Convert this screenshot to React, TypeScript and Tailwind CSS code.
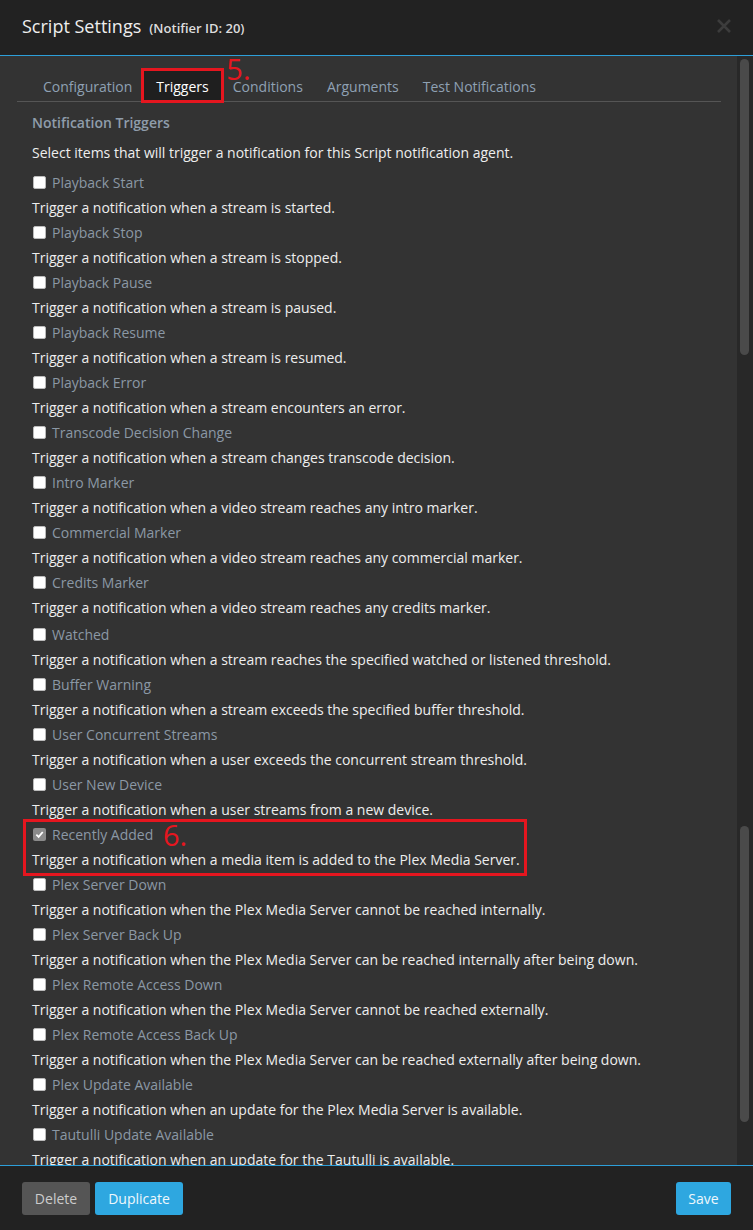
import React from "react";

// Script notifier modal, Triggers tab. Static mock of the settings dialog.

const triggers: Array<{ label: string; desc: string; checked?: boolean; extra?: boolean }> = [
  { label: "Playback Start", desc: "Trigger a notification when a stream is started." },
  { label: "Playback Stop", desc: "Trigger a notification when a stream is stopped." },
  { label: "Playback Pause", desc: "Trigger a notification when a stream is paused." },
  { label: "Playback Resume", desc: "Trigger a notification when a stream is resumed." },
  { label: "Playback Error", desc: "Trigger a notification when a stream encounters an error." },
  { label: "Transcode Decision Change", desc: "Trigger a notification when a stream changes transcode decision." },
  { label: "Intro Marker", desc: "Trigger a notification when a video stream reaches any intro marker." },
  { label: "Commercial Marker", desc: "Trigger a notification when a video stream reaches any commercial marker." },
  { label: "Credits Marker", desc: "Trigger a notification when a video stream reaches any credits marker." },
  {
    label: "Watched",
    desc: "Trigger a notification when a stream reaches the specified watched or listened threshold.",
    extra: true,
  },
  { label: "Buffer Warning", desc: "Trigger a notification when a stream exceeds the specified buffer threshold." },
  { label: "User Concurrent Streams", desc: "Trigger a notification when a user exceeds the concurrent stream threshold." },
  { label: "User New Device", desc: "Trigger a notification when a user streams from a new device." },
  {
    label: "Recently Added",
    desc: "Trigger a notification when a media item is added to the Plex Media Server.",
    checked: true,
  },
  { label: "Plex Server Down", desc: "Trigger a notification when the Plex Media Server cannot be reached internally." },
  {
    label: "Plex Server Back Up",
    desc: "Trigger a notification when the Plex Media Server can be reached internally after being down.",
  },
  { label: "Plex Remote Access Down", desc: "Trigger a notification when the Plex Media Server cannot be reached externally." },
  {
    label: "Plex Remote Access Back Up",
    desc: "Trigger a notification when the Plex Media Server can be reached externally after being down.",
  },
  { label: "Plex Update Available", desc: "Trigger a notification when an update for the Plex Media Server is available." },
  { label: "Tautulli Update Available", desc: "Trigger a notification when an update for the Tautulli is available." },
];

const tabs = ["Configuration", "Triggers", "Conditions", "Arguments", "Test Notifications"];

function Checkbox({ checked }: { checked?: boolean }) {
  if (checked) {
    return (
      <span className="w-[13px] h-[13px] rounded-[2px] bg-[#8a8a8a] flex items-center justify-center">
        <svg width="9" height="9" viewBox="0 0 10 10">
          <path d="M1.5 5.2 L4 7.6 L8.6 2.2" stroke="#fff" strokeWidth="2" fill="none" />
        </svg>
      </span>
    );
  }
  return <span className="w-[13px] h-[13px] rounded-[2px] bg-white border border-[#bbb]" />;
}

function TriggerRow({ label, desc, checked, extra }: (typeof triggers)[number]) {
  const body = (
    <>
      <div className={`flex items-center gap-[6px] h-[20px] pl-px ${extra ? "mt-[7px]" : "mt-[5px]"}`}>
        <Checkbox checked={checked} />
        <span className="text-[#8b98a5]">{label}</span>
      </div>
      <div className="h-[20px] mt-[5px] text-[#eeeeee] whitespace-nowrap">{desc}</div>
    </>
  );
  if (!checked) return body;
  return (
    <div className="relative">
      {body}
      {/* annotation box */}
      <div className="absolute left-[-9px] top-[-5px] w-[504px] h-[57px] border-[3px] border-[#e5161f]" />
      <span className="absolute left-[131px] top-[-4px] text-[29px] leading-none text-[#e5161f]">6.</span>
    </div>
  );
}

export default function App() {
  return (
    <div className="w-[753px] h-[1230px] bg-[#222222] flex flex-col overflow-hidden font-['Open_Sans',sans-serif] text-[14px]">
      {/* header */}
      <div className="h-[56px] shrink-0 flex items-center justify-between pl-[22px] pr-[21px] border-b border-[#2d9fd9]">
        <div className="flex items-baseline gap-[8px] -mt-[2px]">
          <span className="text-[18px] text-[#eeeeee]">Script Settings</span>
          <span className="text-[13px] font-semibold text-[#dddddd]">(Notifier ID: 20)</span>
        </div>
        <svg width="16" height="16" viewBox="0 0 16 16" className="-mt-[4px]">
          <path d="M2 2 L14 14 M14 2 L2 14" stroke="#3c3c3c" strokeWidth="2.6" />
        </svg>
      </div>

      {/* body */}
      <div className="flex-1 flex min-h-0">
        <div className="flex-1 bg-[#333333] overflow-hidden pl-[17px] pr-[16px]">
          <div className="relative mt-[15px] h-[31px] border-b border-[#555555] flex pl-[14px]">
            {tabs.map((t) => (
              <div
                key={t}
                className={`relative h-[30px] px-[12px] flex items-center ${
                  t === "Triggers" ? "bg-[#1f1f1f] text-white" : "text-[#8fa1b3]"
                }`}
              >
                {t}
                {t === "Triggers" && (
                  <>
                    <div className="absolute -left-[3px] -top-[3px] -right-[3px] -bottom-[2px] border-[3px] border-[#e5161f]" />
                    <span className="absolute left-[82px] -top-[17px] text-[29px] leading-none text-[#e5161f]">
                      5.
                    </span>
                  </>
                )}
              </div>
            ))}
          </div>

          <div className="pl-[15px]">
            <div className="mt-[10px] h-[20px] font-semibold text-[#8f9dab]">Notification Triggers</div>
            <div className="mt-[10px] h-[20px] text-[#eeeeee]">
              Select items that will trigger a notification for this Script notification agent.
            </div>
            <div className="mt-[10px]">
              {triggers.map((t) => (
                <TriggerRow key={t.label} {...t} />
              ))}
            </div>
          </div>
        </div>

        {/* scrollbar */}
        <div className="w-[16px] shrink-0 bg-[#282828] flex flex-col pl-[3px] pr-[4px]">
          <div className="mt-[3px] h-[296px] rounded-full bg-[#4a4a4a]" />
          <div className="mt-[471px] h-[296px] rounded-full bg-[#4a4a4a]" />
        </div>
      </div>

      {/* footer */}
      <div className="h-[65px] shrink-0 border-t border-[#2d9fd9] flex items-start justify-between px-[22px] pt-[16px]">
        <div className="flex gap-[5px]">
          <button className="h-[33px] w-[68px] rounded-[3px] bg-[#555555] text-[#cccccc]">Delete</button>
          <button className="h-[33px] w-[88px] rounded-[3px] bg-[#2ea7e0] text-[#eef7fc]">Duplicate</button>
        </div>
        <button className="h-[33px] w-[55px] rounded-[3px] bg-[#2ea7e0] text-[#eef7fc]">Save</button>
      </div>
    </div>
  );
}
